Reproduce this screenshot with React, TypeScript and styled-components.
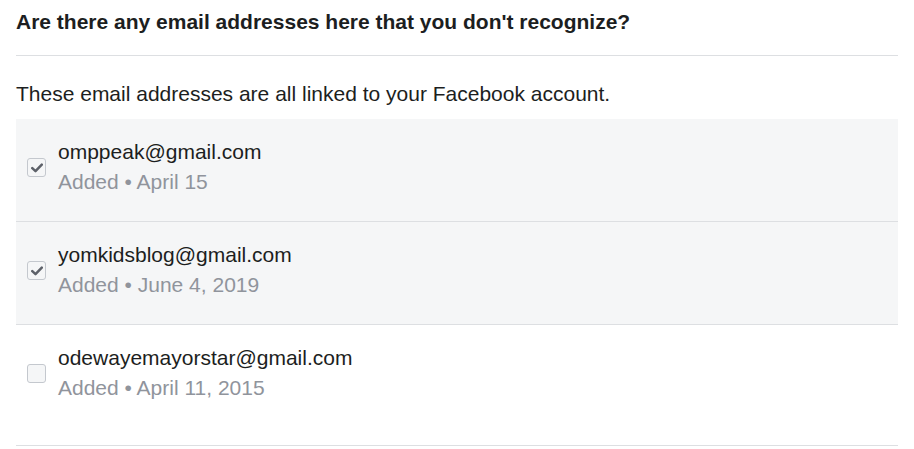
import React from "react";
import styled, { createGlobalStyle } from "styled-components";

const Global = createGlobalStyle`
  html, body { margin: 0; padding: 0; background: #fff; }
  body { font-family: "Liberation Sans", Arial, Helvetica, sans-serif; color: #1c1e21; }
`;

const Page = styled.div`
  margin: 0 16px;
`;

const Title = styled.h2`
  margin: 0;
  padding: 10px 0 0;
  height: 45px;
  font-size: 21px;
  line-height: 24px;
  font-weight: bold;
  color: #1c1e21;
  border-bottom: 1px solid #dddfe2;
`;

const Intro = styled.p`
  margin: 0;
  padding: 26px 0 0;
  height: 37px;
  font-size: 21px;
  line-height: 24px;
  color: #1c1e21;
`;

const List = styled.div`
  display: flex;
  flex-direction: column;
`;

const Row = styled.label<{ $checked: boolean; $last?: boolean }>`
  display: flex;
  align-items: flex-start;
  gap: 12px;
  padding: 20px 11px 0;
  height: ${(p) => (p.$last ? "100px" : "82px")};
  background: ${(p) => (p.$checked ? "#f5f6f7" : "#fff")};
  border-bottom: 1px solid #dddfe2;
`;

const Box = styled.span<{ $checked: boolean }>`
  flex: none;
  width: 19px;
  height: 19px;
  margin-top: 19px;
  box-sizing: border-box;
  border: 1px solid #c4c8ce;
  border-radius: 3px;
  background: #f5f6f7;
  display: flex;
  align-items: center;
  justify-content: center;
`;

const Texts = styled.div`
  display: flex;
  flex-direction: column;
`;

const Email = styled.div`
  font-size: 21px;
  line-height: 26px;
  color: #1c1e21;
`;

const Meta = styled.div`
  font-size: 21px;
  line-height: 34px;
  color: #90949c;
`;

const items = [
  { email: "omppeak@gmail.com", date: "April 15", checked: true },
  { email: "yomkidsblog@gmail.com", date: "June 4, 2019", checked: true },
  { email: "odewayemayorstar@gmail.com", date: "April 11, 2015", checked: false },
];

function Check() {
  return (
    <svg width="12" height="10" viewBox="0 0 12 10">
      <path d="M1.3 5.2 L4.5 8.2 L10.8 1.6" fill="none" stroke="#5d6169" strokeWidth="2.5" strokeLinecap="round" strokeLinejoin="round" />
    </svg>
  );
}

export default function App() {
  return (
    <Page>
      <Global />
      <Title>Are there any email addresses here that you don't recognize?</Title>
      <Intro>These email addresses are all linked to your Facebook account.</Intro>
      <List>
        {items.map((it, i) => (
          <Row key={it.email} $checked={it.checked} $last={i === items.length - 1}>
            <Box $checked={it.checked}>{it.checked && <Check />}</Box>
            <Texts>
              <Email>{it.email}</Email>
              <Meta>Added • {it.date}</Meta>
            </Texts>
          </Row>
        ))}
      </List>
    </Page>
  );
}
